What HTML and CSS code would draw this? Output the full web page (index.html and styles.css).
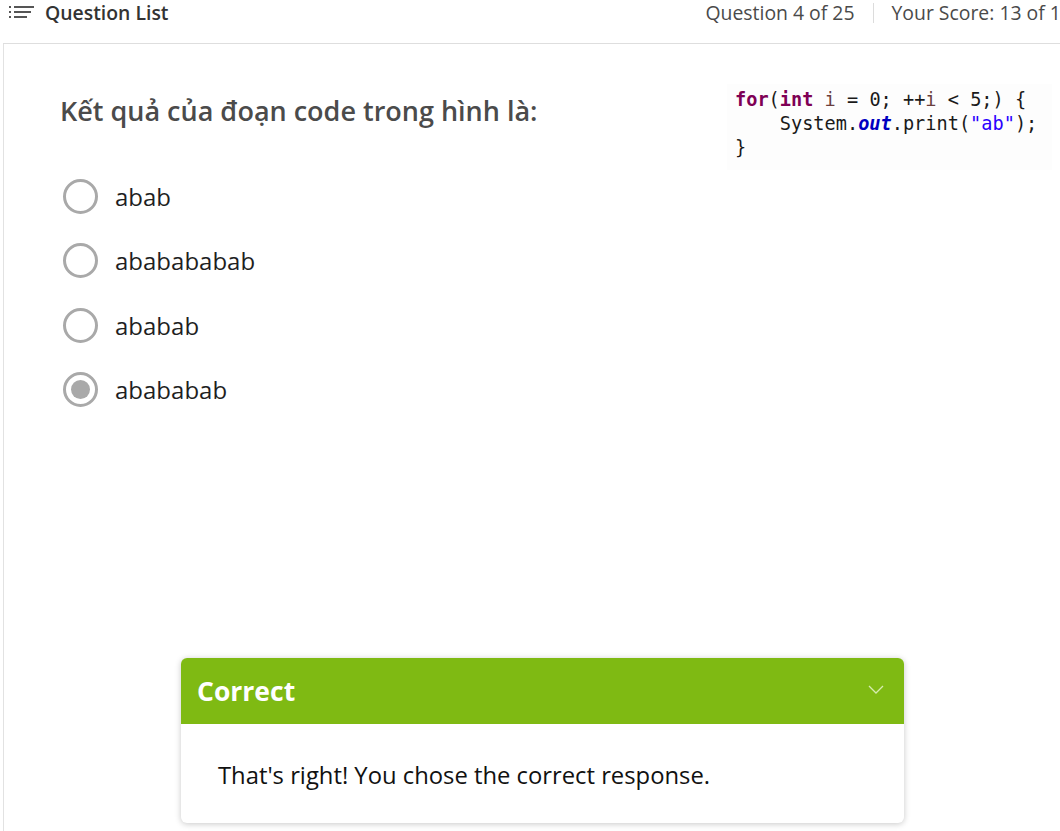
FILE: index.html
```html
<!DOCTYPE html>
<html lang="vi">
<head>
<meta charset="utf-8">
<title>Quiz</title>
<link rel="stylesheet" href="styles.css">
</head>
<body>
<div class="page">
  <header class="topbar">
    <div class="qlist">
      <svg class="qlist-icon" width="26" height="16" viewBox="0 0 26 16">
        <rect x="0" y="2" width="2" height="2" fill="#555"/>
        <rect x="0" y="7" width="2" height="2" fill="#555"/>
        <rect x="0" y="12" width="2" height="2" fill="#555"/>
        <rect x="5" y="2" width="20" height="2" fill="#555"/>
        <rect x="5" y="7" width="17" height="2" fill="#555"/>
        <rect x="5" y="12" width="13" height="2" fill="#555"/>
      </svg>
      <span class="qlist-label">Question List</span>
    </div>
    <div class="status">
      <span class="progress">Question 4 of 25</span>
      <span class="sep"></span>
      <span class="score">Your Score: 13 of 15</span>
    </div>
  </header>
  <main class="content">
    <div class="question-row">
      <h1 class="question">Kết quả của đoạn code trong hình là:</h1>
      <pre class="code"><span class="kw">for</span>(<span class="kw">int</span> <span class="var">i</span> = 0; ++<span class="var">i</span> &lt; 5;) {
    System.<span class="fld">out</span>.print(<span class="str">"ab"</span>);
}</pre>
    </div>
    <ul class="options">
      <li class="option"><span class="radio"></span><span class="opt-text">abab</span></li>
      <li class="option"><span class="radio"></span><span class="opt-text">ababababab</span></li>
      <li class="option"><span class="radio"></span><span class="opt-text">ababab</span></li>
      <li class="option"><span class="radio checked"></span><span class="opt-text">abababab</span></li>
    </ul>
  </main>
  <section class="feedback">
    <div class="fb-head">
      <span class="fb-title">Correct</span>
      <svg class="chev" width="16" height="9" viewBox="0 0 16 9"><path d="M1 1 L8 8 L15 1" fill="none" stroke="#d6ecb0" stroke-width="1.3"/></svg>
    </div>
    <div class="fb-body">That's right! You chose the correct response.</div>
  </section>
</div>
</body>
</html>
```
FILE: styles.css
```css
* { box-sizing: border-box; }
html, body { margin: 0; padding: 0; }
body {
  background: #fff;
  font-family: "Open Sans", "Noto Sans", sans-serif;
  overflow: hidden;
  width: 1060px;
  height: 831px;
}
.page {
  position: relative;
  width: 1100px;
  height: 831px;
}
.topbar {
  height: 44px;
  display: flex;
  justify-content: space-between;
  align-items: flex-start;
  border-bottom: 1px solid #dedede;
  margin-left: 3px;
}
.qlist {
  display: flex;
  align-items: center;
  height: 24px;
  padding-left: 6px;
  gap: 10px;
}
.qlist-icon { display: block; }
.qlist-label {
  font-size: 19.4px;
  font-weight: 600;
  color: #333;
}
.status {
  display: flex;
  align-items: center;
  height: 25px;
  font-size: 19.4px;
  color: #4a4a4a;
  padding-right: 28px;
}
.sep {
  width: 1px;
  height: 20px;
  background: #dcdcdc;
  margin: 0 18px;
}
.content {
  margin-left: 3px;
  border-left: 1px solid #e2e2e2;
  height: 787px;
  padding: 40px 0 0 56px;
}
.question-row {
  display: flex;
  align-items: flex-start;
}
.question {
  margin: 9px 0 0 0;
  font-size: 27px;
  font-weight: 600;
  color: #4b4b4b;
  width: 667px;
  line-height: 36px;
}
.code {
  margin: 0;
  padding: 4px 8px 10px 8px;
  font-family: "DejaVu Sans Mono", "Liberation Mono", monospace;
  font-size: 18.6px;
  line-height: 24px;
  color: #1a1a1a;
  background: #fdfdfd;
  width: 325px;
}
.kw { color: #7f0055; font-weight: bold; }
.var { color: #6a3e3e; }
.fld { color: #0000c0; font-weight: bold; font-style: italic; }
.str { color: #2a00ff; }
.options {
  list-style: none;
  margin: -6px 0 0 0;
  padding: 0;
}
.option {
  display: flex;
  align-items: center;
  height: 64.5px;
}
.radio {
  width: 35px;
  height: 35px;
  border: 3px solid #a9a9a9;
  border-radius: 50%;
  margin-left: 3px;
  margin-right: 17px;
  position: relative;
  flex: none;
}
.radio.checked::after {
  content: "";
  position: absolute;
  left: 5px;
  top: 5px;
  width: 19px;
  height: 19px;
  border-radius: 50%;
  background: #a9a9a9;
}
.opt-text {
  font-size: 24px;
  color: #1f1f1f;
}
.feedback {
  position: absolute;
  left: 181px;
  top: 658px;
  width: 723px;
  border-radius: 6px;
  overflow: hidden;
  background: #fff;
  box-shadow: 0 1px 6px rgba(0,0,0,0.22);
}
.fb-head {
  height: 66px;
  background: #7fba13;
  display: flex;
  align-items: center;
  justify-content: space-between;
  padding: 0 20px 0 16px;
}
.fb-title {
  color: #fff;
  font-size: 26.5px;
  font-weight: 700;
}
.chev { display: block; margin-top: -4px; }
.fb-body {
  height: 99px;
  padding: 35px 0 0 37px;
  font-size: 23.8px;
  color: #111;
}
```
